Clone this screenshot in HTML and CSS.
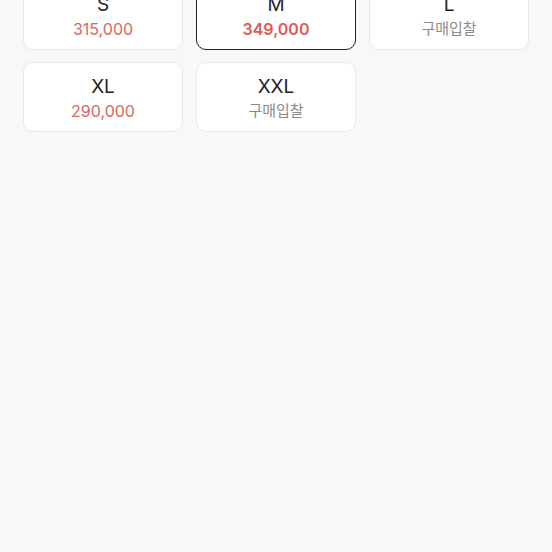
FILE: index.html
```html
<!DOCTYPE html>
<html lang="ko">
<head>
    <meta charset="UTF-8">
    <meta name="viewport" content="width=device-width, initial-scale=1.0">
    <title>사이즈 선택</title>
    <link rel="stylesheet" href="styles.css">
</head>
<body>
    <div class="size-grid">
        <div class="size-card">
            <div class="size-name">S</div>
            <div class="size-price">315,000</div>
        </div>
        <div class="size-card selected">
            <div class="size-name">M</div>
            <div class="size-price">349,000</div>
        </div>
        <div class="size-card">
            <div class="size-name">L</div>
            <div class="size-price bid">구매입찰</div>
        </div>
        <div class="size-card">
            <div class="size-name">XL</div>
            <div class="size-price">290,000</div>
        </div>
        <div class="size-card">
            <div class="size-name">XXL</div>
            <div class="size-price bid">구매입찰</div>
        </div>
    </div>
</body>
</html>
```

FILE: styles.css
```css
body {
    margin: 0;
    padding: 0;
    height: 552px;
    overflow: hidden;
    background-color: #f8f8f8;
    font-family: 'Inter', 'Noto Sans CJK KR', sans-serif;
}

.size-grid {
    display: grid;
    grid-template-columns: repeat(3, 160px);
    gap: 12px 13px;
    padding: 0 23px;
    margin-top: -20px;
}

.size-card {
    height: 70px;
    box-sizing: border-box;
    padding-top: 4px;
    background-color: #fff;
    border: 1px solid #e9e9e9;
    border-radius: 10px;
    display: flex;
    flex-direction: column;
    align-items: center;
    justify-content: center;
    gap: 2px;
}

.size-card.selected {
    border: 1.5px solid #222;
}

.size-name {
    font-size: 19px;
    color: #222;
    line-height: 22px;
}

.size-price {
    font-size: 16px;
    color: #d9655f;
    line-height: 22px;
}

.selected .size-price {
    font-weight: 600;
    color: #e05a52;
}

.size-price.bid {
    font-size: 15px;
    color: #8a8a8a;
}
```
